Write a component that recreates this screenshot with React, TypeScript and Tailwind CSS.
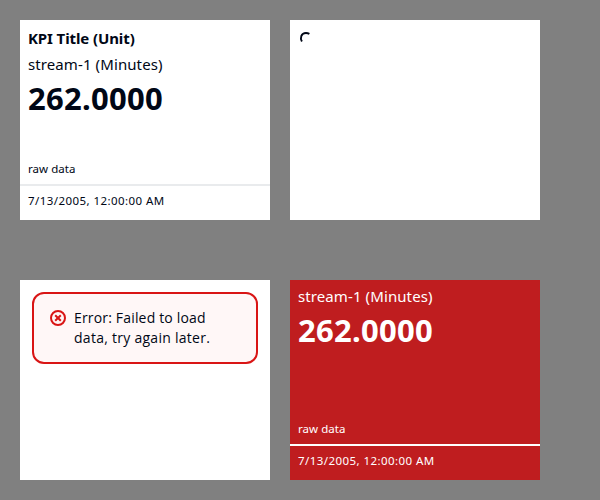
import React from "react";

function Reading({ alarm = false }: { alarm?: boolean }) {
  return (
    <>
      <div className="flex-1 px-2">
        {!alarm && (
          <div className="h-[26px] whitespace-nowrap pt-[6px] text-[15px] leading-6 font-bold tracking-[-0.1px]">
            KPI Title (Unit)
          </div>
        )}
        <div className={"h-[26px] whitespace-nowrap text-[15px] leading-6 tracking-[0.1px] " + (alarm ? "pt-[4px]" : "pt-[6px]")}>
          stream-1 (Minutes)
        </div>
        <div className={"whitespace-nowrap text-[31px] leading-9 font-bold tracking-[0.28px] " + (alarm ? "pt-[6px]" : "pt-[8px]")}>
          262.0000
        </div>
      </div>
      <div className="h-[26px] px-2 text-[11.5px] leading-[22px] tracking-[0.05px]">raw data</div>
      <div className={"h-[2px] " + (alarm ? "bg-white" : "bg-[#e9ebed]")} />
      <div className="h-[34px] px-2 pt-1 text-[11.5px] leading-[22px] tracking-[0.43px] whitespace-nowrap">7/13/2005, 12:00:00 AM</div>
    </>
  );
}

export default function App() {
  return (
    <main className="grid h-[500px] w-[600px] grid-cols-[250px_250px] grid-rows-[200px_200px] gap-x-5 gap-y-[60px] bg-[#808080] p-5 font-['Noto_Sans',sans-serif]">
      <section className="flex flex-col bg-white text-[#000716]">
        <Reading />
      </section>
      <section className="bg-white pt-[10px] pl-2">
        <svg className="size-4" viewBox="0 0 16 16" fill="none" stroke="#000716" strokeWidth="1.9">
          <path d="M3.9 11.5C1.9 8 3.1 3 8 3c1.4 0 2.3.3 3.4.9" />
        </svg>
      </section>
      <section className="bg-white p-3">
        <div className="flex h-[72px] w-[226px] rounded-xl border-2 border-[#d91515] bg-[#fff7f7] pt-[14px] pl-4 text-[14px] leading-5 text-[#000716] font-['Open_Sans',sans-serif]">
          <svg className="mt-[2px] mr-2 size-4" viewBox="0 0 16 16" fill="none" stroke="#d91515" strokeWidth="2">
            <circle cx="8" cy="8" r="7" />
            <path d="m5.2 5.2 5.6 5.6m0-5.6-5.6 5.6" />
          </svg>
          <p>
            <span className="block tracking-[0.17px]">Error: Failed to load</span>
            <span className="block tracking-[0.27px]">data, try again later.</span>
          </p>
        </div>
      </section>
      <section className="flex flex-col bg-[#bf1d1f] text-white">
        <Reading alarm />
      </section>
    </main>
  );
}
